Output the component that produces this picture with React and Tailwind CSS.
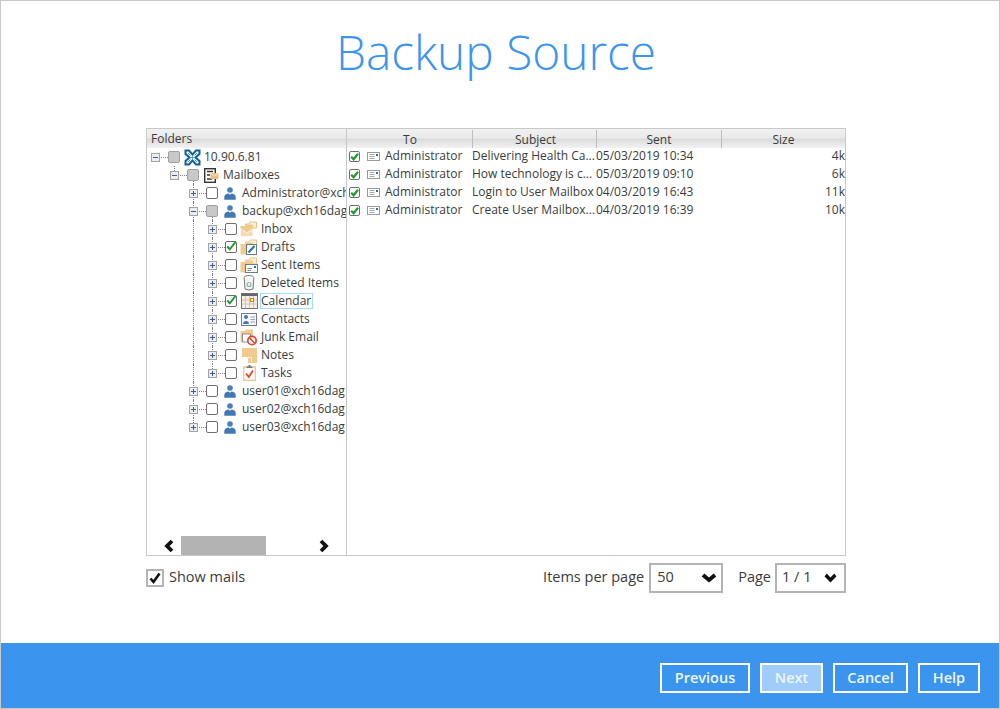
import React from "react";

const Exp = ({ open }) => (
  <span className="relative z-10 flex h-[9px] w-[9px] shrink-0 items-center justify-center border border-[#a3a3a3] bg-[#eeeeee]">
    <span className="absolute h-px w-[5px] bg-[#3f5a9c]" />
    {!open && <span className="absolute h-[5px] w-px bg-[#3f5a9c]" />}
  </span>
);

const Check = ({ state }) => (
  <span className={"relative z-10 flex h-[12px] w-[12px] shrink-0 items-center justify-center rounded-[2px] border " + (state === "mixed" ? "border-[#a0a0a0] bg-[#c8c8c8]" : "border-[#6e6e6e] bg-white")}>
    {state === "on" && (
      <svg width="12" height="12" viewBox="0 0 12 12" className="absolute -left-px -top-[2px]">
        <path d="M2.2 6.5 L4.8 9.3 L10.5 2" fill="none" stroke="#1f9a2e" strokeWidth="2" />
      </svg>
    )}
  </span>
);

const User = () => (
  <svg width="12" height="13" viewBox="0 0 12 13">
    <circle cx="6" cy="3" r="2.8" fill="#4a80b8" />
    <path d="M0.3 12.7 V10 C0.3 7.8 2.6 6.6 4.4 6.5 L6 7.8 L7.6 6.5 C9.4 6.6 11.7 7.8 11.7 10 V12.7 Z" fill="#3f78b3" />
  </svg>
);

const Folder = ({ children }) => (
  <svg width="18" height="16" viewBox="0 0 18 16">
    <path d="M5.5 3 L9 3 L10 1 L16.5 1 L16.5 7 L5.5 7 Z" fill="#faf0da" stroke="#e7c48c" strokeWidth="1" />
    <path d="M0.5 5 L5 5 L6 3.5 L13 3.5 L13 15.5 L0.5 15.5 Z" fill="#f0cb90" />
    {children}
  </svg>
);

const Icon = ({ type }) => {
  if (type === "server")
    return (
      <svg width="17" height="17" viewBox="0 0 17 17">
        <path d="M0.5 0.5 H5.5 L8.5 4 L11.5 0.5 H16.5 V5.5 L13 8.5 L16.5 11.5 V16.5 H11.5 L8.5 13 L5.5 16.5 H0.5 V11.5 L4 8.5 L0.5 5.5 Z" fill="#0f5f9f" />
        <path d="M2.5 2.5 H4.5 L8.5 7 L12.5 2.5 H14.5 V4.5 L10 8.5 L14.5 12.5 V14.5 H12.5 L8.5 10 L4.5 14.5 H2.5 V12.5 L7 8.5 L2.5 4.5 Z" fill="#fff" />
        <path d="M8.5 7 L10 8.5 L8.5 10 L7 8.5 Z" fill="#3a93d6" />
        <path d="M4 4 L6.5 6.5 M13 4 L10.5 6.5 M4 13 L6.5 10.5 M13 13 L10.5 10.5" stroke="#3a93d6" strokeWidth="1" />
      </svg>
    );
  if (type === "mailboxes")
    return (
      <svg width="15" height="15" viewBox="0 0 15 15">
        <rect x="0.7" y="0.7" width="10.6" height="13.6" fill="#fff" stroke="#333" strokeWidth="1.4" />
        <path d="M3 3.5 H9 M3 7 H6 M3 11 H8" stroke="#333" strokeWidth="1.3" />
        <path d="M6.5 5 H14.5 V11 H6.5 Z" fill="#e9bd7c" />
        <path d="M6.5 5 L10.5 8 L14.5 5" fill="none" stroke="#fff" strokeWidth="0.8" />
      </svg>
    );
  if (type === "user") return <User />;
  if (type === "inbox")
    return (
      <Folder>
        <path d="M0.5 8 L7 12 L13 8 V15.5 H0.5 Z" fill="#f6dcae" stroke="#fff" strokeWidth="0.8" />
      </Folder>
    );
  if (type === "drafts")
    return (
      <Folder>
        <rect x="6.5" y="5.5" width="10" height="10" fill="#fff" stroke="#6b7b8b" strokeWidth="1" />
        <path d="M8.5 13.5 L14.5 7" stroke="#2c6db0" strokeWidth="2" />
      </Folder>
    );
  if (type === "sent")
    return (
      <Folder>
        <rect x="5.5" y="7.5" width="12" height="8" fill="#fff" stroke="#6b7b8b" strokeWidth="1" />
        <path d="M7.5 11.5 H12 M7.5 13.5 H11" stroke="#6b7b8b" strokeWidth="0.9" />
        <rect x="14" y="9" width="2" height="2" fill="#2c6db0" />
      </Folder>
    );
  if (type === "deleted")
    return (
      <svg width="12" height="16" viewBox="0 0 12 16">
        <ellipse cx="6" cy="2.5" rx="4.8" ry="2" fill="#fff" stroke="#777" />
        <path d="M1.2 3 L2 14 Q6 16.2 10 14 L10.8 3" fill="#f3f3f3" stroke="#777" />
        <circle cx="6" cy="9.5" r="2" fill="none" stroke="#7fb89a" strokeWidth="1.1" />
      </svg>
    );
  if (type === "calendar")
    return (
      <svg width="17" height="16" viewBox="0 0 17 16">
        <rect x="0.5" y="0.5" width="16" height="15" fill="#f7efe6" stroke="#777" />
        <rect x="0.5" y="0.5" width="16" height="2.5" fill="#666" />
        <path d="M4.5 3 V15 M8.5 3 V15 M12.5 3 V15 M1 7 H16 M1 11 H16" stroke="#c9baa8" strokeWidth="0.8" />
        <rect x="9.5" y="5.5" width="3" height="3" fill="#fff" stroke="#e47a1a" strokeWidth="1" />
      </svg>
    );
  if (type === "contacts")
    return (
      <svg width="16" height="13" viewBox="0 0 16 13">
        <rect x="0.5" y="0.5" width="15" height="12" fill="#f6f6f6" stroke="#6f7b88" />
        <circle cx="5" cy="4" r="2" fill="#3f78b3" />
        <path d="M2 11 C2 7 8 7 8 11 Z" fill="#3f78b3" />
        <path d="M9.5 4 H14 M9.5 6.5 H14 M9.5 9 H14" stroke="#98a2ac" />
      </svg>
    );
  if (type === "junk")
    return (
      <svg width="18" height="17" viewBox="0 0 18 17">
        <path d="M0.5 2 L5 2 L6 0.5 L13 0.5 L13 13 L0.5 13 Z" fill="#f0cb90" />
        <rect x="2.5" y="5" width="8" height="8" fill="#fff" stroke="#777" strokeWidth="0.8" />
        <circle cx="12" cy="11.5" r="4.2" fill="#fff" stroke="#e0452c" strokeWidth="1.7" />
        <path d="M9.5 9 L14.5 14" stroke="#e0452c" strokeWidth="1.7" />
      </svg>
    );
  if (type === "notes")
    return (
      <svg width="15" height="15" viewBox="0 0 15 15">
        <path d="M0 0 H15 V15 H6 V9 H0 Z" fill="#f0cb90" />
        <path d="M5 9.5 H9.5 V14" fill="none" stroke="#fbeed6" strokeWidth="1" />
      </svg>
    );
  if (type === "tasks")
    return (
      <svg width="13" height="16" viewBox="0 0 13 16">
        <rect x="0.7" y="2" width="11.6" height="13.3" fill="#fff" stroke="#ecc98f" strokeWidth="1.4" />
        <path d="M3.5 3 V1.5 H5.5 V0 H7.5 V1.5 H9.5 V3 Z" fill="#777" />
        <path d="M3 8.5 L5.8 12 L10 5.5" fill="none" stroke="#e0452c" strokeWidth="1.8" />
      </svg>
    );
  return null;
};

const tree = [
  { l: 0, s: "mixed", i: "server", t: "10.90.6.81", open: true },
  { l: 1, s: "mixed", i: "mailboxes", t: "Mailboxes", open: true },
  { l: 2, s: "off", i: "user", t: "Administrator@xch" },
  { l: 2, s: "mixed", i: "user", t: "backup@xch16dag", open: true },
  { l: 3, s: "off", i: "inbox", t: "Inbox" },
  { l: 3, s: "on", i: "drafts", t: "Drafts" },
  { l: 3, s: "off", i: "sent", t: "Sent Items" },
  { l: 3, s: "off", i: "deleted", t: "Deleted Items" },
  { l: 3, s: "on", i: "calendar", t: "Calendar", sel: true },
  { l: 3, s: "off", i: "contacts", t: "Contacts" },
  { l: 3, s: "off", i: "junk", t: "Junk Email" },
  { l: 3, s: "off", i: "notes", t: "Notes" },
  { l: 3, s: "off", i: "tasks", t: "Tasks" },
  { l: 2, s: "off", i: "user", t: "user01@xch16dag" },
  { l: 2, s: "off", i: "user", t: "user02@xch16dag" },
  { l: 2, s: "off", i: "user", t: "user03@xch16dag" },
];

const paddings = ["pl-[4px]", "pl-[23px]", "pl-[42px]", "pl-[61px]"];

const Guide = ({ x, y }) => (
  <span className={"absolute w-0 border-l border-dotted border-[#808080] " + x + " " + y} />
);

const TreeRow = ({ r, idx }) => {
  const g = [];
  if (r.l === 1) {
    g.push(<Guide key="a" x="left-[27px]" y="top-0 bottom-[9px]" />);
    g.push(<Guide key="a2" x="left-[46px]" y="top-[13px] bottom-0" />);
  }
  if (r.l === 2) {
    g.push(<Guide key="b" x="left-[46px]" y={idx === 15 ? "top-0 bottom-[9px]" : "top-0 bottom-0"} />);
    if (r.open) g.push(<Guide key="b2" x="left-[65px]" y="top-[13px] bottom-0" />);
  }
  if (r.l === 3) {
    g.push(<Guide key="c" x="left-[46px]" y="top-0 bottom-0" />);
    g.push(<Guide key="d" x="left-[65px]" y={r.t === "Tasks" ? "top-0 bottom-[9px]" : "top-0 bottom-0"} />);
  }
  return (
    <div className={"relative flex h-[18px] items-center " + paddings[r.l]}>
      {g}
      <Exp open={r.open} />
      <span className="ml-px w-[7px] shrink-0 border-t border-dotted border-[#808080]" />
      <Check state={r.s} />
      <span className="ml-[3px] flex w-[18px] shrink-0 items-center justify-center">
        <Icon type={r.i} />
      </span>
      <span className={"whitespace-nowrap text-[12px] leading-[14px] text-[#3b3b3b] " + (r.sel ? "ml-[2px] border border-[#a6dcf5] pr-px" : "ml-[3px]")}>
        {r.t}
      </span>
    </div>
  );
};

const mails = [
  ["Delivering Health Ca...", "05/03/2019 10:34", "4k"],
  ["How technology is c...", "05/03/2019 09:10", "6k"],
  ["Login to User Mailbox", "04/03/2019 16:43", "11k"],
  ["Create User Mailbox...", "04/03/2019 16:39", "10k"],
];

const headGrad = "bg-[linear-gradient(to_bottom,#f1f1f1_0%,#eaeaea_45%,#dcdcdc_55%,#f2f2f2_100%)]";

const MailIcon = () => (
  <svg width="13" height="9" viewBox="0 0 13 9">
    <rect x="0.5" y="0.5" width="12" height="8" fill="#fff" stroke="#9a9a9a" />
    <path d="M2.5 2.5 H7.5 M2.5 4.5 H7.5 M2.5 6.5 H7.5" stroke="#a8a8a8" />
    <rect x="9" y="2" width="2" height="2" fill="#2b6fb0" />
  </svg>
);

const MailCheck = () => (
  <span className="relative flex h-[11px] w-[11px] shrink-0 items-center justify-center rounded-[2px] border border-[#6e6e6e] bg-white">
    <svg width="11" height="11" viewBox="0 0 11 11" className="absolute -left-px -top-px">
      <path d="M2.2 5.8 L4.6 8.3 L9 2.8" fill="none" stroke="#1f9a2e" strokeWidth="2.2" />
    </svg>
  </span>
);

const Chevron = ({ w }) => (
  <svg width={w} height="10" viewBox="0 0 16 10" preserveAspectRatio="none">
    <path d="M2 2 L8 7 L14 2" fill="none" stroke="#111" strokeWidth="4" />
  </svg>
);

const Select = ({ value, w, pad, cw }) => (
  <div className={"flex h-[30px] items-center justify-between border-2 border-[#b4b4b4] bg-white text-[14.5px] text-[#3b3b3b] " + w + " " + pad}>
    <span className="pb-[2px]">{value}</span>
    <Chevron w={cw} />
  </div>
);

const Btn = ({ children, w, dim }) => (
  <button className={"flex h-[30px] items-center justify-center border-2 border-white pb-[1px] text-[14.5px] font-semibold text-[#eef6fe] " + w + " " + (dim ? "bg-[#9fccf8]" : "")}>
    {children}
  </button>
);

export default function App() {
  return (
    <div className="flex h-[709px] w-[1000px] flex-col overflow-hidden border border-[#c8c8c8] bg-white font-['Open_Sans',sans-serif]">
      <h1 className="mt-[19px] h-[64px] pr-[8px] text-center text-[47.8px] font-light leading-[64px] text-[#3b95ee]">
        Backup Source
      </h1>

      <div className="ml-[145px] mt-[44px] flex h-[428px] w-[700px] border border-[#c8c8c8]">
        <div className="flex w-[200px] shrink-0 flex-col border-r border-[#c8c8c8]">
          <div className={"h-[19px] shrink-0 pl-[4px] text-[12px] leading-[20px] text-[#3b3b3b] " + headGrad}>Folders</div>
          <div className="flex-1 overflow-hidden">
            {tree.map((r, i) => (
              <TreeRow key={i} r={r} idx={i} />
            ))}
          </div>
          <div className="flex h-[19px] shrink-0 items-center">
            <svg width="12" height="14" viewBox="0 0 12 14" className="ml-[16px]">
              <path d="M9 2 L4 7 L9 12" fill="none" stroke="#111" strokeWidth="3.8" />
            </svg>
            <div className="ml-[6px] h-[19px] w-[85px] bg-[#b3b3b3]" />
            <svg width="12" height="14" viewBox="0 0 12 14" className="ml-[52px]">
              <path d="M3 2 L8 7 L3 12" fill="none" stroke="#111" strokeWidth="3.8" />
            </svg>
          </div>
        </div>

        <div className="flex min-w-0 flex-1 flex-col">
          <div className={"flex h-[19px] shrink-0 pt-px text-center text-[12px] leading-[19px] text-[#3b3b3b] " + headGrad}>
            <div className="w-[126px] border-r border-[#bdbdbd] pl-px">To</div>
            <div className="w-[124px] border-r border-[#bdbdbd] pl-[2px]">Subject</div>
            <div className="w-[125px] border-r border-[#bdbdbd]">Sent</div>
            <div className="flex-1">Size</div>
          </div>
          {mails.map((m) => (
            <div key={m[1]} className="flex h-[18px] items-center whitespace-nowrap pb-[2px] text-[12px] text-[#3b3b3b]">
              <div className="flex w-[125px] items-center pl-[2px]">
                <MailCheck />
                <span className="ml-[7px] flex"><MailIcon /></span>
                <span className="ml-[5px]">Administrator</span>
              </div>
              <div className="w-[124px]">{m[0]}</div>
              <div className="w-[125px]">{m[1]}</div>
              <div className="flex-1 text-right">{m[2]}</div>
            </div>
          ))}
        </div>
      </div>

      <div className="ml-[145px] mt-[7px] flex h-[30px] w-[700px] items-center">
        <span className="relative flex h-[18px] w-[18px] items-center justify-center border-2 border-[#b4b4b4] bg-white">
          <svg width="14" height="14" viewBox="0 0 14 14">
            <path d="M2.5 7.5 L5.5 11 L11.5 2.5" fill="none" stroke="#111" strokeWidth="2.6" />
          </svg>
        </span>
        <span className="ml-[5px] pb-[2px] text-[14.5px] text-[#3b3b3b]">Show mails</span>
        <span className="ml-auto pb-[2px] text-[14.5px] text-[#3b3b3b]">Items per page</span>
        <span className="ml-[5px]"><Select value="50" w="w-[74px]" pad="pl-[6px] pr-[4px]" cw={16} /></span>
        <span className="ml-[15px] pb-[2px] text-[14.5px] text-[#3b3b3b]">Page</span>
        <span className="ml-[4px]"><Select value="1 / 1" w="w-[71px]" pad="pl-[5px] pr-[7px]" cw={13} /></span>
      </div>

      <div className="mt-auto flex h-[65px] items-start justify-end gap-[10px] bg-[#3b95ee] pr-[19px] pt-[20px]">
        <Btn w="w-[90px]">Previous</Btn>
        <Btn w="w-[63px]" dim>Next</Btn>
        <Btn w="w-[75px]">Cancel</Btn>
        <Btn w="w-[62px]">Help</Btn>
      </div>
    </div>
  );
}
